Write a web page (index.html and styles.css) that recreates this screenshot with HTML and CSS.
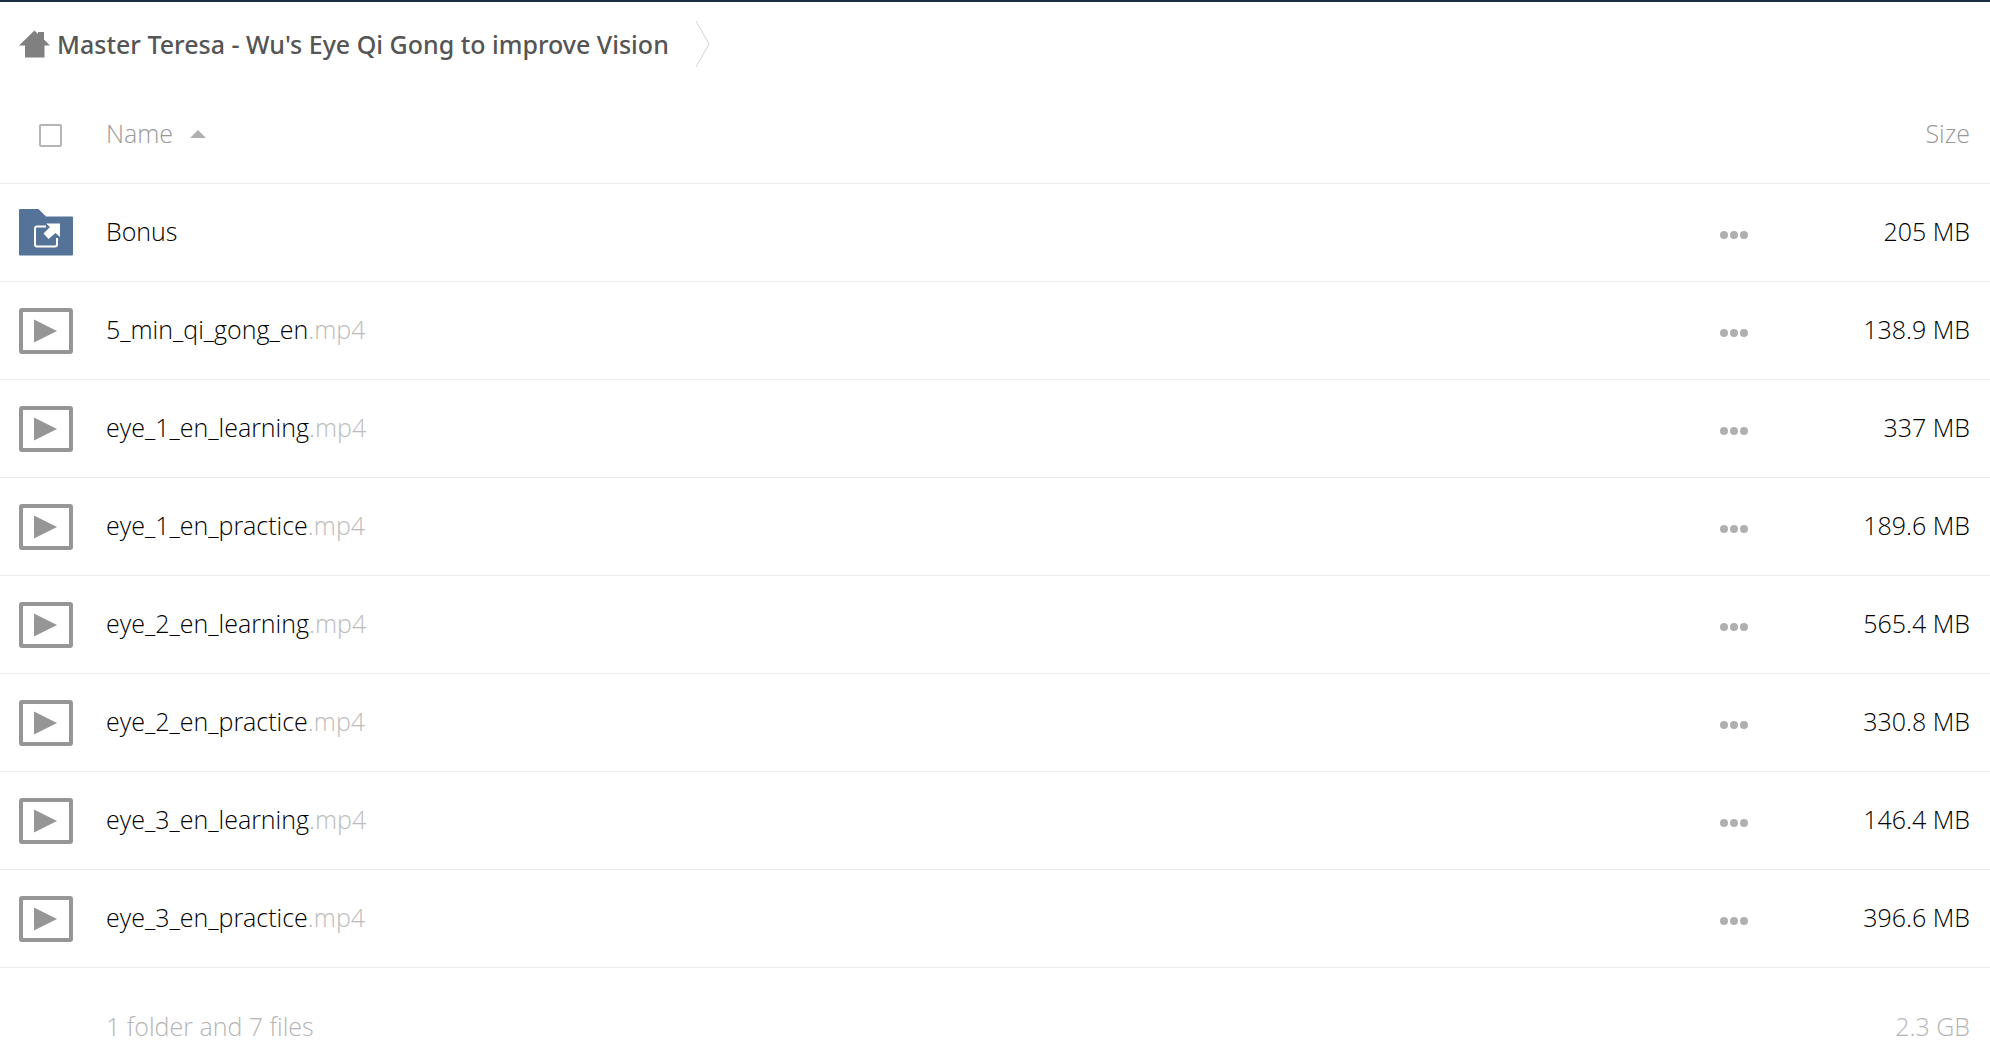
FILE: index.html
```html
<!DOCTYPE html>
<html lang="en">
<head>
    <meta charset="UTF-8">
    <title>Master Teresa - Wu's Eye Qi Gong to improve Vision</title>
    <link rel="stylesheet" href="styles.css">
</head>
<body>
    <svg class="sprite" aria-hidden="true">
        <symbol id="icon-video" viewBox="0 0 54 48">
            <rect x="2" y="3" width="50" height="42" rx="1" fill="none" stroke="#969696" stroke-width="4"/>
            <path d="M15 12.500L38 24L15 35.500Z" fill="#969696"/>
        </symbol>
        <symbol id="icon-more" viewBox="0 0 28 8">
            <circle cx="4" cy="4" r="4"/>
            <circle cx="14" cy="4" r="4"/>
            <circle cx="24" cy="4" r="4"/>
        </symbol>
    </svg>

    <nav class="breadcrumb">
        <a href="#" class="crumb">
            <svg class="home" width="32" height="28" viewBox="0 0 32 28" aria-hidden="true">
                <path d="M15.500 0.500L19 4V2H25V9.500L31 15.500H25.500V27.500H6V15.500H0Z" fill="#808080"/>
            </svg>
            <span>Master Teresa - Wu's Eye Qi Gong to improve Vision</span>
        </a>
        <svg class="separator" width="16" height="48" viewBox="0 0 16 48" aria-hidden="true">
            <path d="M1 1L14 24L1 47" fill="none" stroke="#d2d2d2"/>
        </svg>
    </nav>

    <table class="files">
        <colgroup>
            <col class="col-icon">
            <col>
            <col class="col-actions">
            <col class="col-size">
        </colgroup>
        <thead>
            <tr>
                <th class="select"><input type="checkbox" class="select-all" aria-label="Select all"></th>
                <th class="name"><a href="#" class="sort">Name <span class="arrow"></span></a></th>
                <th></th>
                <th class="size"><a href="#" class="sort">Size</a></th>
            </tr>
        </thead>
        <tbody>
            <tr>
                <td class="icon">
                    <svg width="54" height="48" viewBox="0 0 54 48" aria-hidden="true">
                        <path d="M1 0H19.500L27 7.500H53Q54 7.500 54 8.500V45.500Q54 46.500 53 46.500H1Q0 46.500 0 45.500V1Q0 0 1 0Z" fill="#557299"/>
                        <path d="M27 17.500H18Q16 17.500 16 19.500V35.500Q16 37.500 18 37.500H36Q38 37.500 38 35.500V29" fill="none" stroke="#fff" stroke-width="2"/>
                        <path d="M27 14.500H41V28L36.500 24L29.500 30L24.500 24.500L31 18Z" fill="#fff"/>
                    </svg>
                </td>
                <td class="name"><a href="#">Bonus</a></td>
                <td class="actions"><button type="button" aria-label="Actions"><svg><use href="#icon-more"/></svg></button></td>
                <td class="size">205 MB</td>
            </tr>
            <tr>
                <td class="icon"><svg width="54" height="48"><use href="#icon-video"/></svg></td>
                <td class="name"><a href="#">5_min_qi_gong_en<span class="ext">.mp4</span></a></td>
                <td class="actions"><button type="button" aria-label="Actions"><svg><use href="#icon-more"/></svg></button></td>
                <td class="size">138.9 MB</td>
            </tr>
            <tr>
                <td class="icon"><svg width="54" height="48"><use href="#icon-video"/></svg></td>
                <td class="name"><a href="#">eye_1_en_learning<span class="ext">.mp4</span></a></td>
                <td class="actions"><button type="button" aria-label="Actions"><svg><use href="#icon-more"/></svg></button></td>
                <td class="size">337 MB</td>
            </tr>
            <tr>
                <td class="icon"><svg width="54" height="48"><use href="#icon-video"/></svg></td>
                <td class="name"><a href="#">eye_1_en_practice<span class="ext">.mp4</span></a></td>
                <td class="actions"><button type="button" aria-label="Actions"><svg><use href="#icon-more"/></svg></button></td>
                <td class="size">189.6 MB</td>
            </tr>
            <tr>
                <td class="icon"><svg width="54" height="48"><use href="#icon-video"/></svg></td>
                <td class="name"><a href="#">eye_2_en_learning<span class="ext">.mp4</span></a></td>
                <td class="actions"><button type="button" aria-label="Actions"><svg><use href="#icon-more"/></svg></button></td>
                <td class="size">565.4 MB</td>
            </tr>
            <tr>
                <td class="icon"><svg width="54" height="48"><use href="#icon-video"/></svg></td>
                <td class="name"><a href="#">eye_2_en_practice<span class="ext">.mp4</span></a></td>
                <td class="actions"><button type="button" aria-label="Actions"><svg><use href="#icon-more"/></svg></button></td>
                <td class="size">330.8 MB</td>
            </tr>
            <tr>
                <td class="icon"><svg width="54" height="48"><use href="#icon-video"/></svg></td>
                <td class="name"><a href="#">eye_3_en_learning<span class="ext">.mp4</span></a></td>
                <td class="actions"><button type="button" aria-label="Actions"><svg><use href="#icon-more"/></svg></button></td>
                <td class="size">146.4 MB</td>
            </tr>
            <tr>
                <td class="icon"><svg width="54" height="48"><use href="#icon-video"/></svg></td>
                <td class="name"><a href="#">eye_3_en_practice<span class="ext">.mp4</span></a></td>
                <td class="actions"><button type="button" aria-label="Actions"><svg><use href="#icon-more"/></svg></button></td>
                <td class="size">396.6 MB</td>
            </tr>
        </tbody>
        <tfoot>
            <tr>
                <td></td>
                <td class="name">1 folder and 7 files</td>
                <td></td>
                <td class="size">2.3 GB</td>
            </tr>
        </tfoot>
    </table>
</body>
</html>
```
FILE: styles.css
```css
*{
    margin:0;
    padding:0;
    box-sizing: border-box;
}

body{
    border-top:2px solid #1d2d44;
    background-color:#fff;
    color:#000;
    font-family: "Open Sans", sans-serif;
    font-size:25px;
    font-weight:300;
    line-height:36px;
}

a{
    color: inherit;
    text-decoration: none;
}

svg{
    display: block;
}

.sprite{
    display: none;
}

.breadcrumb{
    display: flex;
    align-items: center;
    height:84px;
    padding-left:19px;
}

.crumb{
    display: flex;
    align-items: center;
    gap:6px;
    color:#555;
    font-family: "Noto Sans", "Open Sans", sans-serif;
    font-weight:500;
}

.separator{
    margin-left:26px;
}

.files{
    width:100%;
    table-layout: fixed;
    border-spacing: 0;
}

.col-icon{
    width:106px;
}

.col-actions{
    width:112px;
}

.col-size{
    width:200px;
}

.files th,
.files tbody td{
    height:98px;
    border-bottom:1px solid #ebebeb;
    vertical-align: middle;
}

.files th{
    color:#999;
    font-weight:300;
    text-align: left;
}

.files .name,
.files .size{
    padding-bottom:3px;
}

.files .size{
    padding-right:20px;
    text-align: right;
}

.files .icon{
    padding-left:19px;
}

.files .select{
    padding-top:2px;
    padding-left:39px;
}

.select-all{
    display: block;
    width:23px;
    height:23px;
    border:2px solid #b5b5b5;
    border-radius:2px;
    background-color:#fff;
    appearance: none;
}

.sort{
    display: inline-flex;
    align-items: center;
    gap:17px;
}

.arrow{
    margin-top:2px;
    border:8px solid transparent;
    border-top:0;
    border-bottom-color:#b0b0b0;
}

.ext{
    color:#bbb;
}

.actions button{
    display: block;
    margin:0 auto;
    padding:20px 14px 16px;
    border:0;
    background: none;
    cursor: pointer;
}

.actions svg{
    width:28px;
    height:8px;
    fill:#b0b0b0;
}

.files tfoot td{
    padding-top:40px;
    color:#b5b5b5;
}
```
